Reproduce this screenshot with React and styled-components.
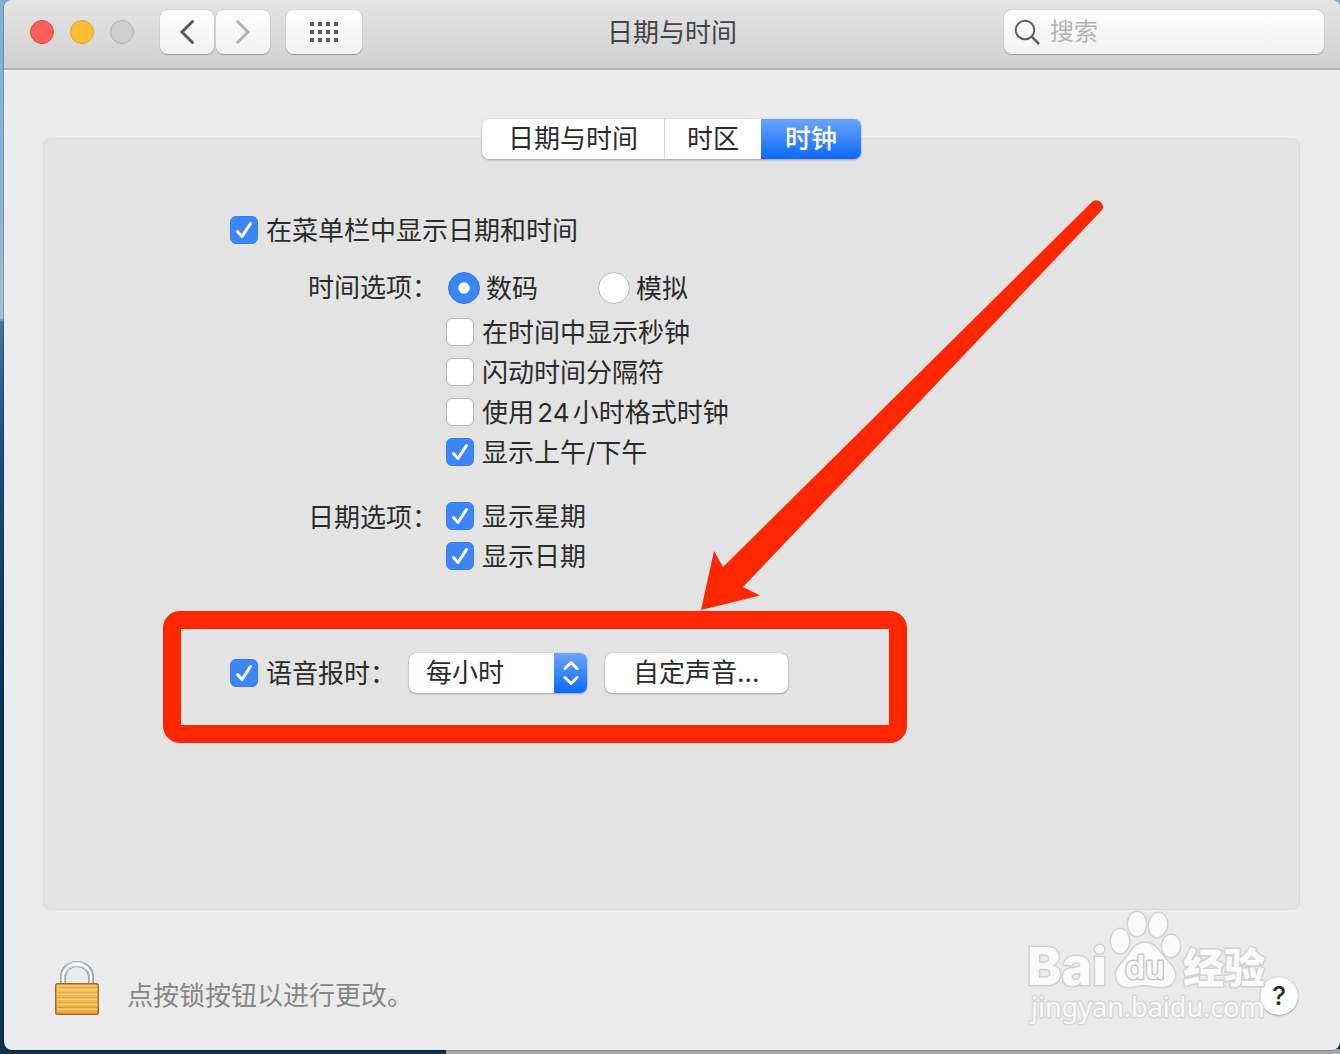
import React, { useState } from "react";
import styled, { createGlobalStyle } from "styled-components";

const GlobalStyle = createGlobalStyle`
  *, *::before, *::after { box-sizing: border-box; }
  body { margin: 0; }
  body, button, input, select {
    font-family: Inter, "Noto Sans CJK SC", sans-serif;
    font-size: 26px;
    line-height: 28px;
    color: #2b2b2b;
    text-autospace: normal;
  }
  button, input, select { margin: 0; padding: 0; }
`;

const controlShadow = "0 0 1px rgba(0, 0, 0, 0.45), 0 1px 2px rgba(0, 0, 0, 0.25)";

const Desktop = styled.div`
  display: flex;
  min-height: 100vh;
  padding: 0 0 4px 4px;
  background:
    linear-gradient(#a8a8a7, #a8a8a7) right bottom / calc(100% - 446px) 5px no-repeat,
    linear-gradient(#7fb0dc 0, #8fb3d4 200px, #a9bfd0 318px, #3f77a6 322px, #1f4f80 440px, #0f2f54 700px, #10304f 100%);
`;

const Window = styled.main`
  position: relative;
  flex: 1;
  display: flex;
  flex-direction: column;
  background: #ebebeb;
  border-radius: 8px;
  box-shadow: 0 0 1px 1px rgba(0, 0, 0, 0.2);
`;

const TitleBar = styled.header`
  display: grid;
  grid-template-columns: 1fr auto 1fr;
  align-items: center;
  padding: 10px 16px 14px;
  background: linear-gradient(#e4e4e4, #d0d0d0);
  border-bottom: 2px solid #b0b0b0;
  border-radius: 8px 8px 0 0;
`;

const Title = styled.h1`
  margin: 0;
  padding-top: 2px;
  font-size: 26px;
  font-weight: 400;
  color: #444;
`;

const BarGroup = styled.div`
  display: flex;
  align-items: center;
  gap: 16px;
`;

const Lights = styled.div`
  display: flex;
  gap: 16px;
  padding: 0 10px;
`;

const NavButtons = styled.div`
  display: flex;
  gap: 2px;
`;

const Light = styled.button`
  width: 24px;
  height: 24px;
  border: 1px solid ${(p) => p.$edge};
  border-radius: 50%;
  background: ${(p) => p.$fill};
`;

const BarButton = styled.button`
  display: grid;
  place-items: center;
  width: ${(p) => (p.$wide ? 76 : 54)}px;
  height: 44px;
  border: 0;
  border-radius: 8px;
  background: linear-gradient(#fdfdfd, #f2f2f2);
  box-shadow: 0 0 1px rgba(0, 0, 0, 0.35), 0 1px 1px rgba(0, 0, 0, 0.25);
`;

const SearchBox = styled.label`
  justify-self: end;
  display: flex;
  align-items: center;
  gap: 10px;
  width: 320px;
  height: 44px;
  padding: 0 10px;
  border-radius: 8px;
  background: linear-gradient(#fdfdfd, #f2f2f2);
  box-shadow: 0 0 1px rgba(0, 0, 0, 0.35), 0 1px 1px rgba(0, 0, 0, 0.25);
`;

const SearchInput = styled.input`
  flex: 1;
  min-width: 0;
  border: 0;
  outline: 0;
  background: none;
  font-size: 24px;
  &::placeholder { color: #b4b4b4; opacity: 1; }
`;

const Content = styled.div`
  flex: 1;
  display: flex;
  flex-direction: column;
  padding: 49px 40px 0 39px;
`;

const Tabs = styled.div`
  z-index: 1;
  align-self: center;
  display: flex;
  height: 40px;
  margin-bottom: -21px;
  border-radius: 7px;
  background: #fff;
  box-shadow: ${controlShadow};
  overflow: hidden;
`;

const Tab = styled.button`
  padding: 0 ${(p) => p.$pad}px;
  border: 0;
  background: ${(p) => (p.$active ? "linear-gradient(#6aa5fb, #0a68ff)" : "#fff")};
  color: ${(p) => (p.$active ? "#fff" : "#2b2b2b")};
  font-weight: ${(p) => (p.$active ? 500 : 400)};
  &:first-child { border-right: 1px solid #d8d8d8; }
`;

const Panel = styled.section`
  flex: 1;
  display: flex;
  flex-direction: column;
  align-items: flex-start;
  padding: 77px 40px 40px 186px;
  border: 1px solid #dadada;
  border-radius: 8px;
  background: #e3e3e3;
`;

const OptionGrid = styled.div`
  display: grid;
  grid-template-columns: 130px 1fr;
  column-gap: 8px;
  padding-left: 78px;
  margin-top: ${(p) => p.$top}px;
`;

const GroupLabel = styled.div`
  padding-top: 2px;
  white-space: nowrap;
`;

const Options = styled.div`
  display: flex;
  flex-direction: column;
  align-items: flex-start;
  gap: 12px;
`;

const RadioRow = styled.div`
  display: flex;
  gap: 60px;
  padding: 0 0 2px 2px;
`;

const Choice = styled.label`
  display: flex;
  align-items: center;
  gap: ${(p) => (p.$radio ? 6 : 8)}px;
  white-space: nowrap;
`;

const ChoiceText = styled.span`
  padding-top: 2px;
  line-height: 26px;
`;

const Mark = styled.span`
  display: grid;
  & > * { grid-area: 1 / 1; }
  & > svg { pointer-events: none; visibility: hidden; }
  & > input:checked + svg { visibility: visible; }
`;

const Tick = styled.input`
  appearance: none;
  width: ${(p) => (p.type === "radio" ? 32 : 28)}px;
  height: ${(p) => (p.type === "radio" ? 32 : 28)}px;
  border: 1px solid #b9b9b9;
  border-radius: ${(p) => (p.type === "radio" ? "50%" : "6px")};
  background: #fff;
  &:checked { border-color: #377ff0; background: #3d86f8; }
`;

const VoiceRow = styled.div`
  position: relative;
  display: flex;
  align-items: center;
  margin-top: 83px;
`;

const SelectBox = styled.div`
  display: grid;
  grid-template-columns: 1fr 33px;
  width: 178px;
  height: 40px;
  margin: 0 18px 0 13px;
  border-radius: 7px;
  background: #fff;
  box-shadow: ${controlShadow};
  overflow: hidden;
`;

const Select = styled.select`
  grid-area: 1 / 1 / 2 / 3;
  appearance: none;
  padding: 0 34px 0 17px;
  border: 0;
  background: none;
`;

const SelectArrows = styled.span`
  grid-area: 1 / 2;
  display: grid;
  place-items: center;
  background: linear-gradient(#6aa5fb, #0a68ff);
  pointer-events: none;
`;

const PushButton = styled.button`
  height: 40px;
  padding: 0 28px;
  border: 0;
  border-radius: 7px;
  background: #fff;
  box-shadow: ${controlShadow};
`;

const Highlight = styled.div`
  position: absolute;
  left: -67px;
  top: -42px;
  width: 744px;
  height: 132px;
  border: 18px solid #ff2600;
  border-radius: 17px;
  pointer-events: none;
`;

const Arrow = styled.svg`
  position: absolute;
  left: 470px;
  bottom: 82px;
  pointer-events: none;
`;

const Footer = styled.footer`
  display: flex;
  align-items: flex-end;
  gap: 28px;
  height: 140px;
  padding: 0 42px 35px 51px;
`;

const LockButton = styled.button`
  height: 54px;
  border: 0;
  background: none;
`;

const Hint = styled.p`
  flex: 1;
  margin: 0;
  line-height: 38px;
  color: #868686;
`;

const HelpButton = styled.button`
  width: 38px;
  height: 38px;
  border: 0;
  border-radius: 50%;
  background: #fff;
  font-weight: 500;
  box-shadow: ${controlShadow};
`;

const Watermark = styled.svg`
  position: absolute;
  right: 60px;
  bottom: 20px;
  pointer-events: none;
`;

function CheckBox({ label, on = false }) {
  return (
    <Choice>
      <Mark>
        <Tick type="checkbox" defaultChecked={on} />
        <svg width="28" height="28" viewBox="0 0 28 28" fill="none" stroke="#fff" strokeWidth="3" strokeLinecap="round" strokeLinejoin="round">
          <path d="M7.500 15.500 12 20.500 20.500 7.500" />
        </svg>
      </Mark>
      <ChoiceText>{label}</ChoiceText>
    </Choice>
  );
}

function Radio({ label, on = false }) {
  return (
    <Choice $radio>
      <Mark>
        <Tick type="radio" name="clock-face" defaultChecked={on} />
        <svg width="32" height="32" viewBox="0 0 32 32">
          <circle cx="16" cy="16" r="5.7" fill="#fff" />
        </svg>
      </Mark>
      <ChoiceText>{label}</ChoiceText>
    </Choice>
  );
}

function LockIcon() {
  return (
    <svg width="44" height="54" viewBox="0 0 44 54" display="block">
      <defs>
        <linearGradient id="brass" x1="0" x2="0" y1="0" y2="1">
          <stop offset="0" stopColor="#fbc765" />
          <stop offset="1" stopColor="#f5a53c" />
        </linearGradient>
        <linearGradient id="steel" x1="0" x2="1" y1="0" y2="0">
          <stop offset="0" stopColor="#b4bdc8" />
          <stop offset="0.5" stopColor="#e6ebf0" />
          <stop offset="1" stopColor="#a8b3c0" />
        </linearGradient>
      </defs>
      <path d="M8 24V16a14 13 0 0 1 28 0v8" fill="none" stroke="#848d98" strokeWidth="6" />
      <path d="M8 24V16a14 13 0 0 1 28 0v8" fill="none" stroke="url(#steel)" strokeWidth="5" />
      <path d="M8 23V16a14 13 0 0 1 28 0v7" fill="none" stroke="#fff" strokeWidth="2" />
      <rect x="0.7" y="22.7" width="42.6" height="30.6" rx="1.8" fill="url(#brass)" stroke="#a8671c" strokeWidth="1.4" />
      <path d="M2 27h40M2 32h40M2 37h40M2 42h40M2 47h40" stroke="#d58a2c" strokeWidth="1.2" />
      <path d="M2 28.2h40M2 33.2h40M2 38.2h40M2 43.2h40M2 48.2h40" stroke="#ffdc8e" strokeWidth="1.2" />
    </svg>
  );
}

function BaiduMark() {
  return (
    <Watermark width="252" height="124" viewBox="0 0 252 124" fill="#fafafa" stroke="#d2d2d2" strokeWidth="3" paintOrder="stroke" strokeLinejoin="round">
      <ellipse cx="92" cy="35" rx="9" ry="12" />
      <ellipse cx="109" cy="18" rx="9" ry="12" />
      <ellipse cx="130" cy="19" rx="9" ry="12" transform="rotate(10 130 19)" />
      <ellipse cx="143" cy="40" rx="9" ry="11" />
      <path d="M117 37c8 0 12 5 17 12 5 7 13 12 13 20 0 8-6 12-13 12-6 0-11-2-17-2s-11 2-17 2c-7 0-12-5-12-12 0-8 8-13 13-20 4-7 8-12 16-12z" />
      <text x="-1" y="79" fontFamily='Inter, sans-serif' fontSize="52" fontWeight="800">Bai</text>
      <text x="97" y="73" fontFamily='Inter, sans-serif' fontSize="32" fontWeight="600" stroke="#c8c8c8">du</text>
      <text x="155" y="77" fontFamily='"Noto Sans CJK SC", sans-serif' fontSize="41" fontWeight="900">经验</text>
      <text x="3" y="111" fontFamily='"Noto Sans", sans-serif' fontSize="27" stroke="#d8d8d8">jingyan.baidu.com</text>
    </Watermark>
  );
}

const TABS = [
  { name: "日期与时间", pad: 26 },
  { name: "时区", pad: 22 },
  { name: "时钟", pad: 24 },
];

export default function App() {
  const [tab, setTab] = useState("时钟");
  return (
    <Desktop>
      <GlobalStyle />
      <Window>
        <TitleBar>
          <BarGroup>
            <Lights>
              <Light aria-label="关闭" $fill="#fc5f57" $edge="#e2473f" />
              <Light aria-label="最小化" $fill="#fdbd2e" $edge="#dfa023" />
              <Light aria-label="缩放" $fill="#cecece" $edge="#b0b0b0" />
            </Lights>
            <NavButtons>
              <BarButton aria-label="后退">
                <svg width="16" height="26" viewBox="0 0 16 26" fill="none" stroke="#5c5c5c" strokeWidth="3" strokeLinecap="round">
                  <path d="M13.5 2.5 3 13 13.5 23.5" />
                </svg>
              </BarButton>
              <BarButton aria-label="前进">
                <svg width="16" height="26" viewBox="0 0 16 26" fill="none" stroke="#b4b4b4" strokeWidth="3" strokeLinecap="round">
                  <path d="M2.5 2.5 13 13 2.5 23.5" />
                </svg>
              </BarButton>
            </NavButtons>
            <BarButton $wide aria-label="显示全部">
              <svg width="28" height="20" viewBox="0 0 28 20" fill="#5c5c5c">
                {[0, 8, 16].map((y) =>
                  [0, 8, 16, 24].map((x) => <rect key={`${x}-${y}`} x={x} y={y} width="4" height="4" />)
                )}
              </svg>
            </BarButton>
          </BarGroup>
          <Title>日期与时间</Title>
          <SearchBox>
            <svg width="26" height="26" viewBox="0 0 26 26" fill="none" stroke="#5f5f5f" strokeWidth="2" aria-hidden="true">
              <circle cx="11" cy="11" r="9.3" />
              <path d="M17.6 17.6 25 25" strokeWidth="2.6" />
            </svg>
            <SearchInput type="search" placeholder="搜索" aria-label="搜索" />
          </SearchBox>
        </TitleBar>

        <Content>
          <Tabs role="tablist">
            {TABS.map((t) => (
              <Tab key={t.name} role="tab" aria-selected={tab === t.name} $active={tab === t.name} $pad={t.pad} onClick={() => setTab(t.name)}>
                {t.name}
              </Tab>
            ))}
          </Tabs>
          <Panel>
            <CheckBox label="在菜单栏中显示日期和时间" on />
            <OptionGrid $top={28} role="group" aria-labelledby="time-options">
              <GroupLabel id="time-options">时间选项：</GroupLabel>
              <Options>
                <RadioRow>
                  <Radio label="数码" on />
                  <Radio label="模拟" />
                </RadioRow>
                <CheckBox label="在时间中显示秒钟" />
                <CheckBox label="闪动时间分隔符" />
                <CheckBox label="使用24小时格式时钟" />
                <CheckBox label="显示上午/下午" on />
              </Options>
            </OptionGrid>
            <OptionGrid $top={36} role="group" aria-labelledby="date-options">
              <GroupLabel id="date-options">日期选项：</GroupLabel>
              <Options>
                <CheckBox label="显示星期" on />
                <CheckBox label="显示日期" on />
              </Options>
            </OptionGrid>
            <VoiceRow>
              <CheckBox label="语音报时：" on />
              <SelectBox>
                <Select aria-label="报时间隔" defaultValue="每小时">
                  <option>每小时</option>
                </Select>
                <SelectArrows>
                  <svg width="16" height="26" viewBox="0 0 16 26" fill="none" stroke="#fff" strokeWidth="3" strokeLinecap="round" strokeLinejoin="round">
                    <path d="M2 8.5 8 2.5 14 8.5M2 17.5 8 23.5 14 17.5" />
                  </svg>
                </SelectArrows>
              </SelectBox>
              <PushButton>自定声音...</PushButton>
              <Highlight />
              <Arrow width="404" height="412" viewBox="700 199 404 412" fill="#ff2600" aria-hidden="true">
                <path d="M701 610 714 551 723 567 1092 202A6.5 6.5 0 0 1 1102 210L743 587 760 595.500Z" />
              </Arrow>
            </VoiceRow>
          </Panel>
        </Content>

        <Footer>
          <LockButton aria-label="锁">
            <LockIcon />
          </LockButton>
          <Hint>点按锁按钮以进行更改。</Hint>
          <HelpButton aria-label="帮助">?</HelpButton>
        </Footer>
        <BaiduMark />
      </Window>
    </Desktop>
  );
}
